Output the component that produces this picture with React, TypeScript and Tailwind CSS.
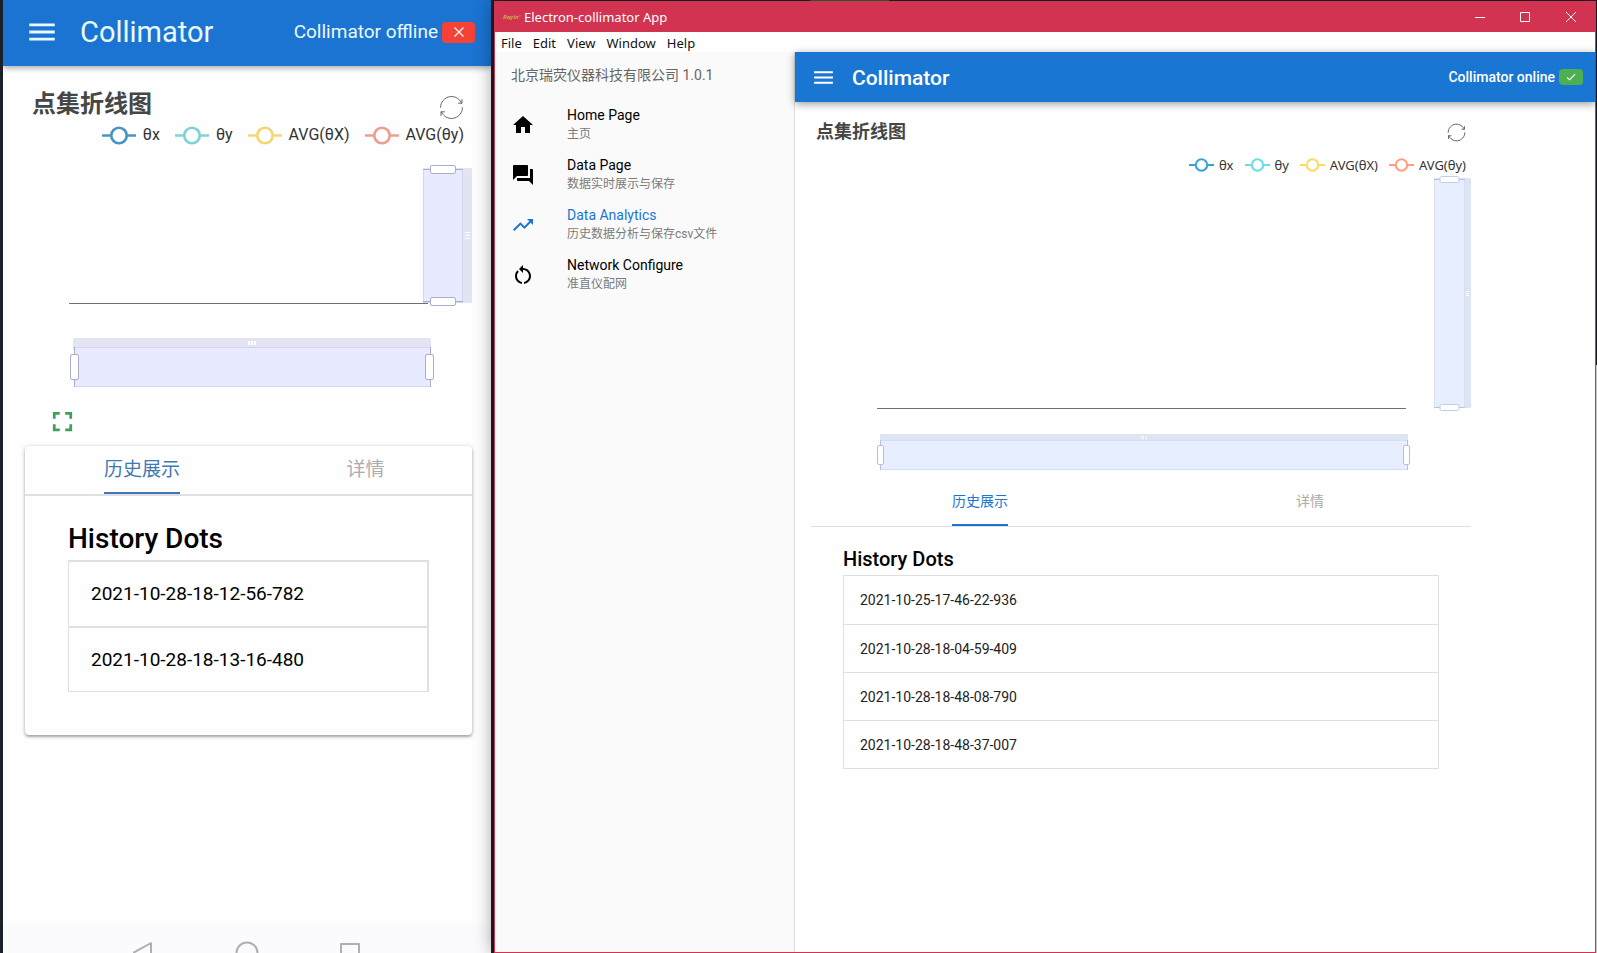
import type { ReactNode } from "react";
import {
  MdCheck,
  MdFullscreen,
  MdHome,
  MdMenu,
  MdQuestionAnswer,
  MdRestartAlt,
  MdTrendingUp,
} from "react-icons/md";

const roboto = "font-[Roboto,'Noto_Sans_CJK_SC',sans-serif]";
const system = "font-['Noto_Sans','Noto_Sans_CJK_SC',sans-serif]";

function RestoreIcon({ className }: { className: string }) {
  return (
    <svg viewBox="-2 -2 64 64" fill="none" stroke="#666" className={className} aria-hidden="true">
      <path
        vectorEffect="non-scaling-stroke"
        d="M47 18.9h9.8V8.7M56.3 20.1C52.1 9 40.5.6 26.8 2.1C12.6 3.7 1.6 16.2 2.1 30.6M13 41.1H3.1v10.2M3.7 39.9c4.2 11.1 15.8 19.5 29.5 18c14.2-1.6 25.2-14.1 24.7-28.5"
      />
    </svg>
  );
}

function LegendMark({ color, className }: { color: string; className: string }) {
  return (
    <svg viewBox="0 0 25 14" className={className} aria-hidden="true">
      <path d="M0 7h25" stroke={color} strokeWidth="2" />
      <circle cx="12.5" cy="7" r="5.7" fill="#fff" stroke={color} strokeWidth="2" />
    </svg>
  );
}

function PhoneChart() {
  return (
    <svg viewBox="0 0 470 230" className="block h-[230px] w-[470px]" role="img" aria-label="点集折线图">
      <rect x="420" y="7" width="49" height="135" rx="1" fill="#e2e4f4" />
      <rect x="420.5" y="8.5" width="39" height="133" fill="#e8ebff" stroke="#d2d5ee" />
      <path d="M66 142.5h359" stroke="#6e7079" />
      <path d="M420 8.500h40M420 140.500h40" stroke="#acaccb" />
      <rect x="427.500" y="4.500" width="25" height="8" rx="1.500" fill="#fff" stroke="#acaccb" />
      <rect x="427.500" y="136.500" width="25" height="8" rx="1.500" fill="#fff" stroke="#acaccb" />
      <path d="M462 71.500h5M462 74.500h5M462 77.500h5" stroke="#fff" />
      <rect x="70" y="177" width="358" height="12" rx="1" fill="#e2e4f4" />
      <rect x="71.500" y="186.500" width="356" height="39" fill="#e8ebff" stroke="#d2d5ee" />
      <path d="M71.500 186v40M427.500 186v40" stroke="#acaccb" />
      <rect x="67.500" y="193.500" width="8" height="25" rx="1.500" fill="#fff" stroke="#acaccb" />
      <rect x="422.500" y="193.500" width="8" height="25" rx="1.500" fill="#fff" stroke="#acaccb" />
      <path d="M246 180v4M249 180v4M252 180v4" stroke="#fff" strokeWidth="2" />
    </svg>
  );
}

function DesktopChart() {
  return (
    <svg viewBox="0 0 660 302" className="block h-[302px] w-full" role="img" aria-label="点集折线图">
      <rect x="623" y="5" width="37" height="230" rx="1" fill="#dde5f2" />
      <rect x="623.500" y="5.500" width="30" height="229" fill="#e7eeff" stroke="#d8e1f3" />
      <path d="M66 235.500h529" stroke="#6e7079" />
      <path d="M623 6.500h31M623 234.500h31" stroke="#b9c5df" />
      <rect x="629" y="3.500" width="19" height="6" rx="1.500" fill="#fff" stroke="#c3cee4" />
      <rect x="629" y="231.500" width="19" height="6" rx="1.500" fill="#fff" stroke="#c3cee4" />
      <path d="M655 118.500h3M655 120.500h3M655 122.500h3" stroke="#fff" />
      <rect x="69" y="261" width="528" height="8" rx="1" fill="#dde5f2" />
      <rect x="69.500" y="267.500" width="527" height="29" fill="#e7eeff" stroke="#d3def1" />
      <path d="M69.500 267v30M596.500 267v30" stroke="#b3bfdc" />
      <rect x="66.500" y="272.500" width="6" height="19" rx="1.500" fill="#fff" stroke="#b3bfdc" />
      <rect x="592.500" y="272.500" width="6" height="19" rx="1.500" fill="#fff" stroke="#b3bfdc" />
      <path d="M330.500 263v3M332.500 263v3M335.500 263v3" stroke="#fff" />
    </svg>
  );
}

const phoneLegend = [
  { name: "θx", color: "#4a94c4" },
  { name: "θy", color: "#7fd3d6" },
  { name: "AVG(θX)", color: "#f2d777" },
  { name: "AVG(θy)", color: "#eaa08f" },
];

const desktopLegend = [
  { name: "θx", color: "#37a2da" },
  { name: "θy", color: "#67e0e3" },
  { name: "AVG(θX)", color: "#ffdb5c" },
  { name: "AVG(θy)", color: "#ff9f7f" },
];

function Phone() {
  return (
    <section className={`flex w-[488px] shrink-0 flex-col overflow-hidden bg-[#fefefe] ${roboto}`}>
      <header className="z-10 flex h-[66px] shrink-0 items-center bg-[#1b74d1] pr-4 pb-[2px] pl-[22px] text-[#eafaff] shadow-[0_2px_6px_rgba(0,0,0,0.35)]">
        <button aria-label="Menu" className="mr-[21px]">
          <MdMenu className="size-[34px]" />
        </button>
        <h1 className="flex-1 text-[29px] leading-9">Collimator</h1>
        <span className="text-[19px] leading-6">Collimator offline</span>
        <span className="ml-1 flex h-[21px] w-[33px] items-center justify-center rounded bg-[#f44336]">
          <svg viewBox="0 0 10 10" className="size-[10px]" stroke="#fff" strokeWidth="1.200" aria-hidden="true">
            <path d="M.5.5l9 9M9.500.5l-9 9" />
          </svg>
        </span>
      </header>

      <div className="flex items-center justify-between pt-5 pr-[27px] pl-[29px]">
        <h2 className="text-[24px] leading-9 font-bold text-[#464646]">点集折线图</h2>
        <button aria-label="Restore" className="pt-[6px]">
          <RestoreIcon className="size-[25px]" />
        </button>
      </div>
      <ul className="flex h-[26px] items-center justify-end gap-[15px] pr-[27px] text-[16px] leading-6 text-[#333]">
        {phoneLegend.map((item) => (
          <li key={item.name} className="flex items-center gap-[7px]">
            <LegendMark color={item.color} className="h-[19px] w-[34px]" />
            {item.name}
          </li>
        ))}
      </ul>
      <div className="pt-[13px]">
        <PhoneChart />
      </div>
      <div className="flex h-[55px] items-center pt-[6px] pl-[43px]">
        <button aria-label="Fullscreen" className="text-[#3f9f5c]">
          <MdFullscreen className="size-[33px]" />
        </button>
      </div>

      <div className="mr-[19px] ml-[22px] rounded shadow-[0_1px_4px_rgba(0,0,0,0.25),0_2px_2px_rgba(0,0,0,0.2)]">
        <div role="tablist" className="grid h-[50px] grid-cols-[234px_1fr] border-b-2 border-[#e0dfe3] text-[19px] leading-6">
          <button role="tab" aria-selected="true" className="flex justify-center text-[#3f79b5]">
            <span className="h-full border-b-2 border-[#3f79b5] pt-3">历史展示</span>
          </button>
          <button role="tab" aria-selected="false" className="flex justify-center pt-3 text-[#acacac]">
            详情
          </button>
        </div>
        <div className="px-[43px] pt-[25px] pb-[43px]">
          <h3 className="text-[28px] leading-9 font-medium text-black">History Dots</h3>
          <ul className="mt-[3px] border border-t-2 border-r-2 border-[#e0e0e0] text-[19px] leading-7 text-black">
            <li className="flex h-[66px] items-center border-b-2 border-[#e0e0e0] px-[22px]">2021-10-28-18-12-56-782</li>
            <li className="flex h-[63px] items-center px-[22px]">2021-10-28-18-13-16-480</li>
          </ul>
        </div>
      </div>

      <nav className="mt-auto flex h-[29px] shrink-0 items-start overflow-hidden bg-[#fbfafd] pt-[17px] pl-[130px]">
        <button aria-label="Back">
          <svg viewBox="0 0 22 24" className="h-6 w-[22px]" fill="none" stroke="#b0b0b3" strokeWidth="2" strokeLinejoin="round" aria-hidden="true">
            <path d="M18 2v20L0 12z" />
          </svg>
        </button>
        <button aria-label="Home" className="ml-20">
          <svg viewBox="0 0 24 24" className="size-6" fill="none" stroke="#b0b0b3" strokeWidth="2" aria-hidden="true">
            <circle cx="12" cy="12" r="10.500" />
          </svg>
        </button>
        <button aria-label="Recent apps" className="ml-20">
          <svg viewBox="0 0 24 24" className="size-6" fill="none" stroke="#b0b0b3" strokeWidth="2" strokeLinejoin="round" aria-hidden="true">
            <path d="M2 3h18v18H2z" />
          </svg>
        </button>
      </nav>
    </section>
  );
}

function DrawerItem({ icon, label, caption, active = false }: { icon: ReactNode; label: string; caption: string; active?: boolean }) {
  return (
    <li>
      <a href="#" className={`flex h-[50px] items-center px-4 ${active ? "text-[#1976d2]" : "text-black"}`}>
        <span className="w-14 text-[24px]">{icon}</span>
        <span>
          <span className="block text-[14px] leading-[18px]">{label}</span>
          <span className="block text-[12px] leading-5 text-[#7b7b7b]">{caption}</span>
        </span>
      </a>
    </li>
  );
}

const records = [
  "2021-10-25-17-46-22-936",
  "2021-10-28-18-04-59-409",
  "2021-10-28-18-48-08-790",
  "2021-10-28-18-48-37-007",
];

function DesktopWindow() {
  return (
    <section className="z-20 flex min-w-0 flex-1 flex-col border border-t-0 border-[#d23350] bg-white shadow-[0_0_18px_rgba(0,0,0,0.45)]">
      <div className={`flex h-[31px] shrink-0 items-center bg-[#d23350] text-white ${system}`}>
        <span className="w-[29px] pl-2 text-[6px] leading-3 font-bold text-[#c8ad45] italic">Royin'</span>
        <span className="flex-1 text-[13px] leading-4">Electron-collimator App</span>
        <button aria-label="Minimize" className="flex h-full w-[46px] items-center justify-center">
          <svg viewBox="0 0 10 10" className="size-[10px]" stroke="#fff" aria-hidden="true">
            <path d="M0 5.500h10" />
          </svg>
        </button>
        <button aria-label="Maximize" className="flex h-full w-11 items-center justify-center">
          <svg viewBox="0 0 10 10" className="size-[10px]" fill="none" stroke="#fff" aria-hidden="true">
            <path d="M.5.5h9v9h-9z" />
          </svg>
        </button>
        <button aria-label="Close" className="flex h-full w-12 items-center justify-center">
          <svg viewBox="0 0 10 10" className="size-[10px]" stroke="#fff" aria-hidden="true">
            <path d="M0 0l10 10M10 0L0 10" />
          </svg>
        </button>
      </div>
      <nav className={`flex h-5 shrink-0 items-center gap-[11px] bg-white pt-[2px] pl-[6px] text-[13px] leading-[18px] text-[#111] ${system}`}>
        <button>File</button>
        <button>Edit</button>
        <button>View</button>
        <button>Window</button>
        <button>Help</button>
      </nav>

      <div className={`flex min-h-0 flex-1 ${roboto}`}>
        <aside className="w-[300px] shrink-0 border-r border-[#dedede] bg-[#fafafa]">
          <p className="flex h-12 items-center px-4 pb-[2px] text-[14px] leading-5 text-[#666]">北京瑞荧仪器科技有限公司 1.0.1</p>
          <ul>
            <DrawerItem icon={<MdHome />} label="Home Page" caption="主页" />
            <DrawerItem icon={<MdQuestionAnswer />} label="Data Page" caption="数据实时展示与保存" />
            <DrawerItem icon={<MdTrendingUp />} label="Data Analytics" caption="历史数据分析与保存csv文件" active />
            <DrawerItem icon={<MdRestartAlt />} label="Network Configure" caption="准直仪配网" />
          </ul>
        </aside>

        <main className="flex min-w-0 flex-1 flex-col">
          <header className="flex h-[50px] shrink-0 items-center bg-[#1976d2] pr-3 pl-4 text-white shadow-[0_2px_8px_rgba(0,0,0,0.4)]">
            <button aria-label="Menu" className="mr-4">
              <MdMenu className="size-[25px]" />
            </button>
            <h1 className="flex-1 pt-px text-[21px] leading-6 font-medium">Collimator</h1>
            <span className="text-[14px] leading-5 font-medium">Collimator online</span>
            <span className="ml-1 flex h-4 w-6 items-center justify-center rounded bg-[#4caf50]">
              <MdCheck className="size-3" />
            </span>
          </header>

          <div className="max-w-[676px] pl-4">
            <div className="flex items-center justify-between pt-4 pr-[5px] pl-[5px]">
              <h2 className="text-[18px] leading-7 font-bold text-[#464646]">点集折线图</h2>
              <button aria-label="Restore">
                <RestoreIcon className="size-[19px]" />
              </button>
            </div>
            <ul className={`flex h-[27px] items-end justify-end gap-[11px] pr-[5px] text-[13px] leading-4 text-[#333] ${system}`}>
              {desktopLegend.map((item) => (
                <li key={item.name} className="flex items-center gap-[5px]">
                  <LegendMark color={item.color} className="h-[14px] w-[25px]" />
                  {item.name}
                </li>
              ))}
            </ul>
            <DesktopChart />
            <div role="tablist" className="grid h-[52px] grid-cols-[338px_1fr] border-b border-[#e0e0e0] text-[14px] leading-5">
              <button role="tab" aria-selected="true" className="flex justify-center text-[#1976d2]">
                <span className="h-full border-b-2 border-[#1976d2] pt-4">历史展示</span>
              </button>
              <button role="tab" aria-selected="false" className="flex justify-center pt-4 text-[#acacac]">
                详情
              </button>
            </div>
            <div className="px-8 pt-4">
              <h3 className="text-[20px] leading-8 font-medium text-black">History Dots</h3>
              <ul className="border border-[#e0e0e0] text-[14px] leading-5 text-[#222]">
                {records.map((record) => (
                  <li key={record} className="flex h-12 items-center border-t border-[#e0e0e0] px-4 first:border-t-0">
                    {record}
                  </li>
                ))}
              </ul>
            </div>
          </div>
        </main>
      </div>
    </section>
  );
}

export default function App() {
  return (
    <div className="flex h-screen flex-col overflow-hidden bg-[#1c2029]">
      <div className="flex min-h-0 flex-1 pl-[3px]">
        <Phone />
        <div className="flex min-w-0 flex-1 flex-col pl-[3px]">
          <div className="h-px shrink-0 bg-[#22242d] pl-[316px]">
            <div className="h-px w-[79px] bg-[#316b38]" />
          </div>
          <DesktopWindow />
        </div>
        <div className="z-30 flex w-px shrink-0 flex-col">
          <div className="h-[365px] bg-[#15171d]" />
          <div className="flex-1 bg-[#c8c8c8]" />
        </div>
      </div>
    </div>
  );
}
